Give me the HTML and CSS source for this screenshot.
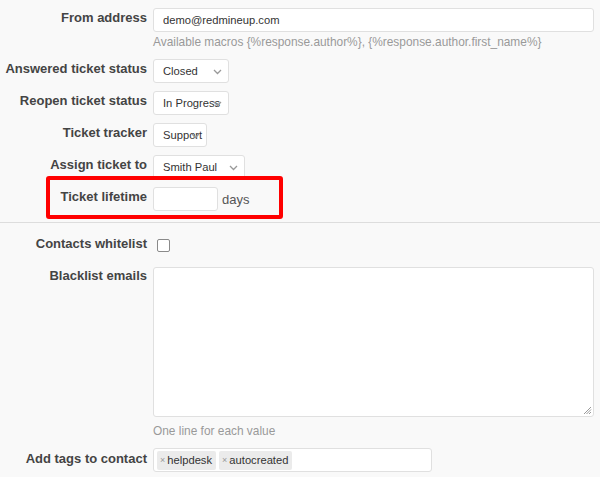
FILE: index.html
```html
<!DOCTYPE html>
<html>
<head>
<meta charset="utf-8">
<link rel="stylesheet" href="styles.css">
</head>
<body>
<div class="form top">
  <div class="row r-from">
    <label class="lbl">From address</label>
    <div class="field">
      <input class="text wide" type="text" value="demo@redmineup.com">
      <div class="hint">Available macros {%response.author%}, {%response.author.first_name%}</div>
    </div>
  </div>
  <div class="row">
    <label class="lbl">Answered ticket status</label>
    <div class="field">
      <span class="sel w76"><span class="sel-text">Closed</span><svg class="chev" width="9" height="6" viewBox="0 0 9 6"><path d="M1 1 L4.5 4.5 L8 1" fill="none" stroke="#999" stroke-width="1.3"/></svg></span>
    </div>
  </div>
  <div class="row">
    <label class="lbl">Reopen ticket status</label>
    <div class="field">
      <span class="sel w76"><span class="sel-text">In Progress</span><svg class="chev" width="9" height="6" viewBox="0 0 9 6"><path d="M1 1 L4.5 4.5 L8 1" fill="none" stroke="#999" stroke-width="1.3"/></svg></span>
    </div>
  </div>
  <div class="row">
    <label class="lbl">Ticket tracker</label>
    <div class="field">
      <span class="sel w54"><span class="sel-text">Support</span><svg class="chev" width="9" height="6" viewBox="0 0 9 6"><path d="M1 1 L4.5 4.5 L8 1" fill="none" stroke="#999" stroke-width="1.3"/></svg></span>
    </div>
  </div>
  <div class="row">
    <label class="lbl">Assign ticket to</label>
    <div class="field">
      <span class="sel w92"><span class="sel-text">Smith Paul</span><svg class="chev" width="9" height="6" viewBox="0 0 9 6"><path d="M1 1 L4.5 4.5 L8 1" fill="none" stroke="#999" stroke-width="1.3"/></svg></span>
    </div>
  </div>
  <div class="row r-life">
    <label class="lbl">Ticket lifetime</label>
    <div class="field inline">
      <input class="text w65" type="text" value="">
      <span class="unit">days</span>
    </div>
    <div class="highlight"></div>
  </div>
</div>
<div class="divider"></div>
<div class="form bottom">
  <div class="row r-check">
    <label class="lbl">Contacts whitelist</label>
    <div class="field">
      <span class="checkbox"></span>
    </div>
  </div>
  <div class="row r-area">
    <label class="lbl">Blacklist emails</label>
    <div class="field">
      <div class="textarea"><svg class="grip" width="9" height="9" viewBox="0 0 9 9"><path d="M8 1 L1 8 M8 3.5 L3.5 8 M8 6 L6 8" stroke="#999" stroke-width="1"/></svg></div>
      <div class="hint">One line for each value</div>
    </div>
  </div>
  <div class="row r-tags">
    <label class="lbl">Add tags to contact</label>
    <div class="field">
      <div class="tagbox">
        <span class="tag"><span class="x">×</span>helpdesk</span>
        <span class="tag"><span class="x">×</span>autocreated</span>
      </div>
    </div>
  </div>
</div>
</body>
</html>
```
FILE: styles.css
```css
html, body {
  margin: 0;
  padding: 0;
}
body {
  background: #f9f9f9;
  font-family: "Liberation Sans", Arial, sans-serif;
  color: #333;
  width: 600px;
  height: 477px;
  overflow: hidden;
}
.form {
  display: flex;
  flex-direction: column;
}
.form.top {
  padding-top: 8px;
  gap: 8px;
}
.row {
  display: flex;
  align-items: flex-start;
  position: relative;
}
.lbl {
  width: 147px;
  flex: none;
  text-align: right;
  font-weight: bold;
  font-size: 13px;
  line-height: 20px;
  color: #444;
  white-space: nowrap;
  padding-right: 6px;
}
.field {
  flex: none;
}
.field.inline {
  display: flex;
  align-items: center;
  gap: 4px;
}
.text {
  box-sizing: border-box;
  height: 24px;
  border: 1px solid #e0e0e0;
  border-radius: 3px;
  background: #fff;
  font-family: "Liberation Sans", Arial, sans-serif;
  font-size: 11.2px;
  color: #333;
  padding: 0 9px;
  margin: 0;
  outline: none;
  display: block;
}
.text.wide { width: 441px; }
.text.w65 { width: 65px; }
.unit {
  font-size: 13px;
  color: #555;
}
.hint {
  font-size: 11.9px;
  color: #999;
  line-height: 16px;
  margin-top: 2px;
}
.r-from { margin-bottom: 1px; }
.sel {
  position: relative;
  display: block;
  box-sizing: border-box;
  height: 24px;
  border: 1px solid #e0e0e0;
  border-radius: 3px;
  background: #fff;
  font-size: 11.2px;
  line-height: 22px;
  color: #333;
  padding-left: 9px;
  overflow: hidden;
  white-space: nowrap;
}
.sel-text {
  position: relative;
  z-index: 0;
}
.sel.w76 { width: 76px; }
.sel.w54 { width: 54px; }
.sel.w92 { width: 92px; }
.chev {
  position: absolute;
  z-index: 1;
  right: 6px;
  top: 9px;
}
.highlight {
  position: absolute;
  left: 46px;
  top: -11px;
  width: 237px;
  height: 43px;
  box-sizing: border-box;
  border: 4px solid #f00;
  border-radius: 3px;
}
.divider {
  height: 1px;
  background: #ddd;
  margin-top: 11px;
}
.form.bottom {
  padding-top: 12px;
}
.r-check .lbl { line-height: 18px; }
.checkbox {
  display: block;
  box-sizing: border-box;
  width: 13px;
  height: 13px;
  border: 1.5px solid #8a8a8a;
  border-radius: 2px;
  background: #fff;
  margin: 4px 0 0 4px;
}
.r-area { margin-top: 14px; }
.r-area .lbl { line-height: 18px; }
.textarea {
  position: relative;
  box-sizing: border-box;
  width: 441px;
  height: 150px;
  border: 1px solid #e0e0e0;
  border-radius: 3px;
  background: #fff;
}
.grip {
  position: absolute;
  right: 1px;
  bottom: 1px;
}
.r-area .hint { margin-top: 6px; }
.r-tags { margin-top: 9px; }
.r-tags .lbl { line-height: 22px; }
.tagbox {
  box-sizing: border-box;
  width: 279px;
  height: 24px;
  border: 1px solid #e0e0e0;
  border-radius: 3px;
  background: #fff;
  display: flex;
  align-items: center;
  gap: 3px;
  padding-left: 3px;
}
.tag {
  display: inline-flex;
  align-items: center;
  height: 19px;
  background: #ebebeb;
  border-radius: 2px;
  padding: 0 4px 0 3px;
  font-size: 11.2px;
  color: #333;
}
.tag .x {
  font-size: 9px;
  color: #999;
  margin-right: 2px;
}
```
